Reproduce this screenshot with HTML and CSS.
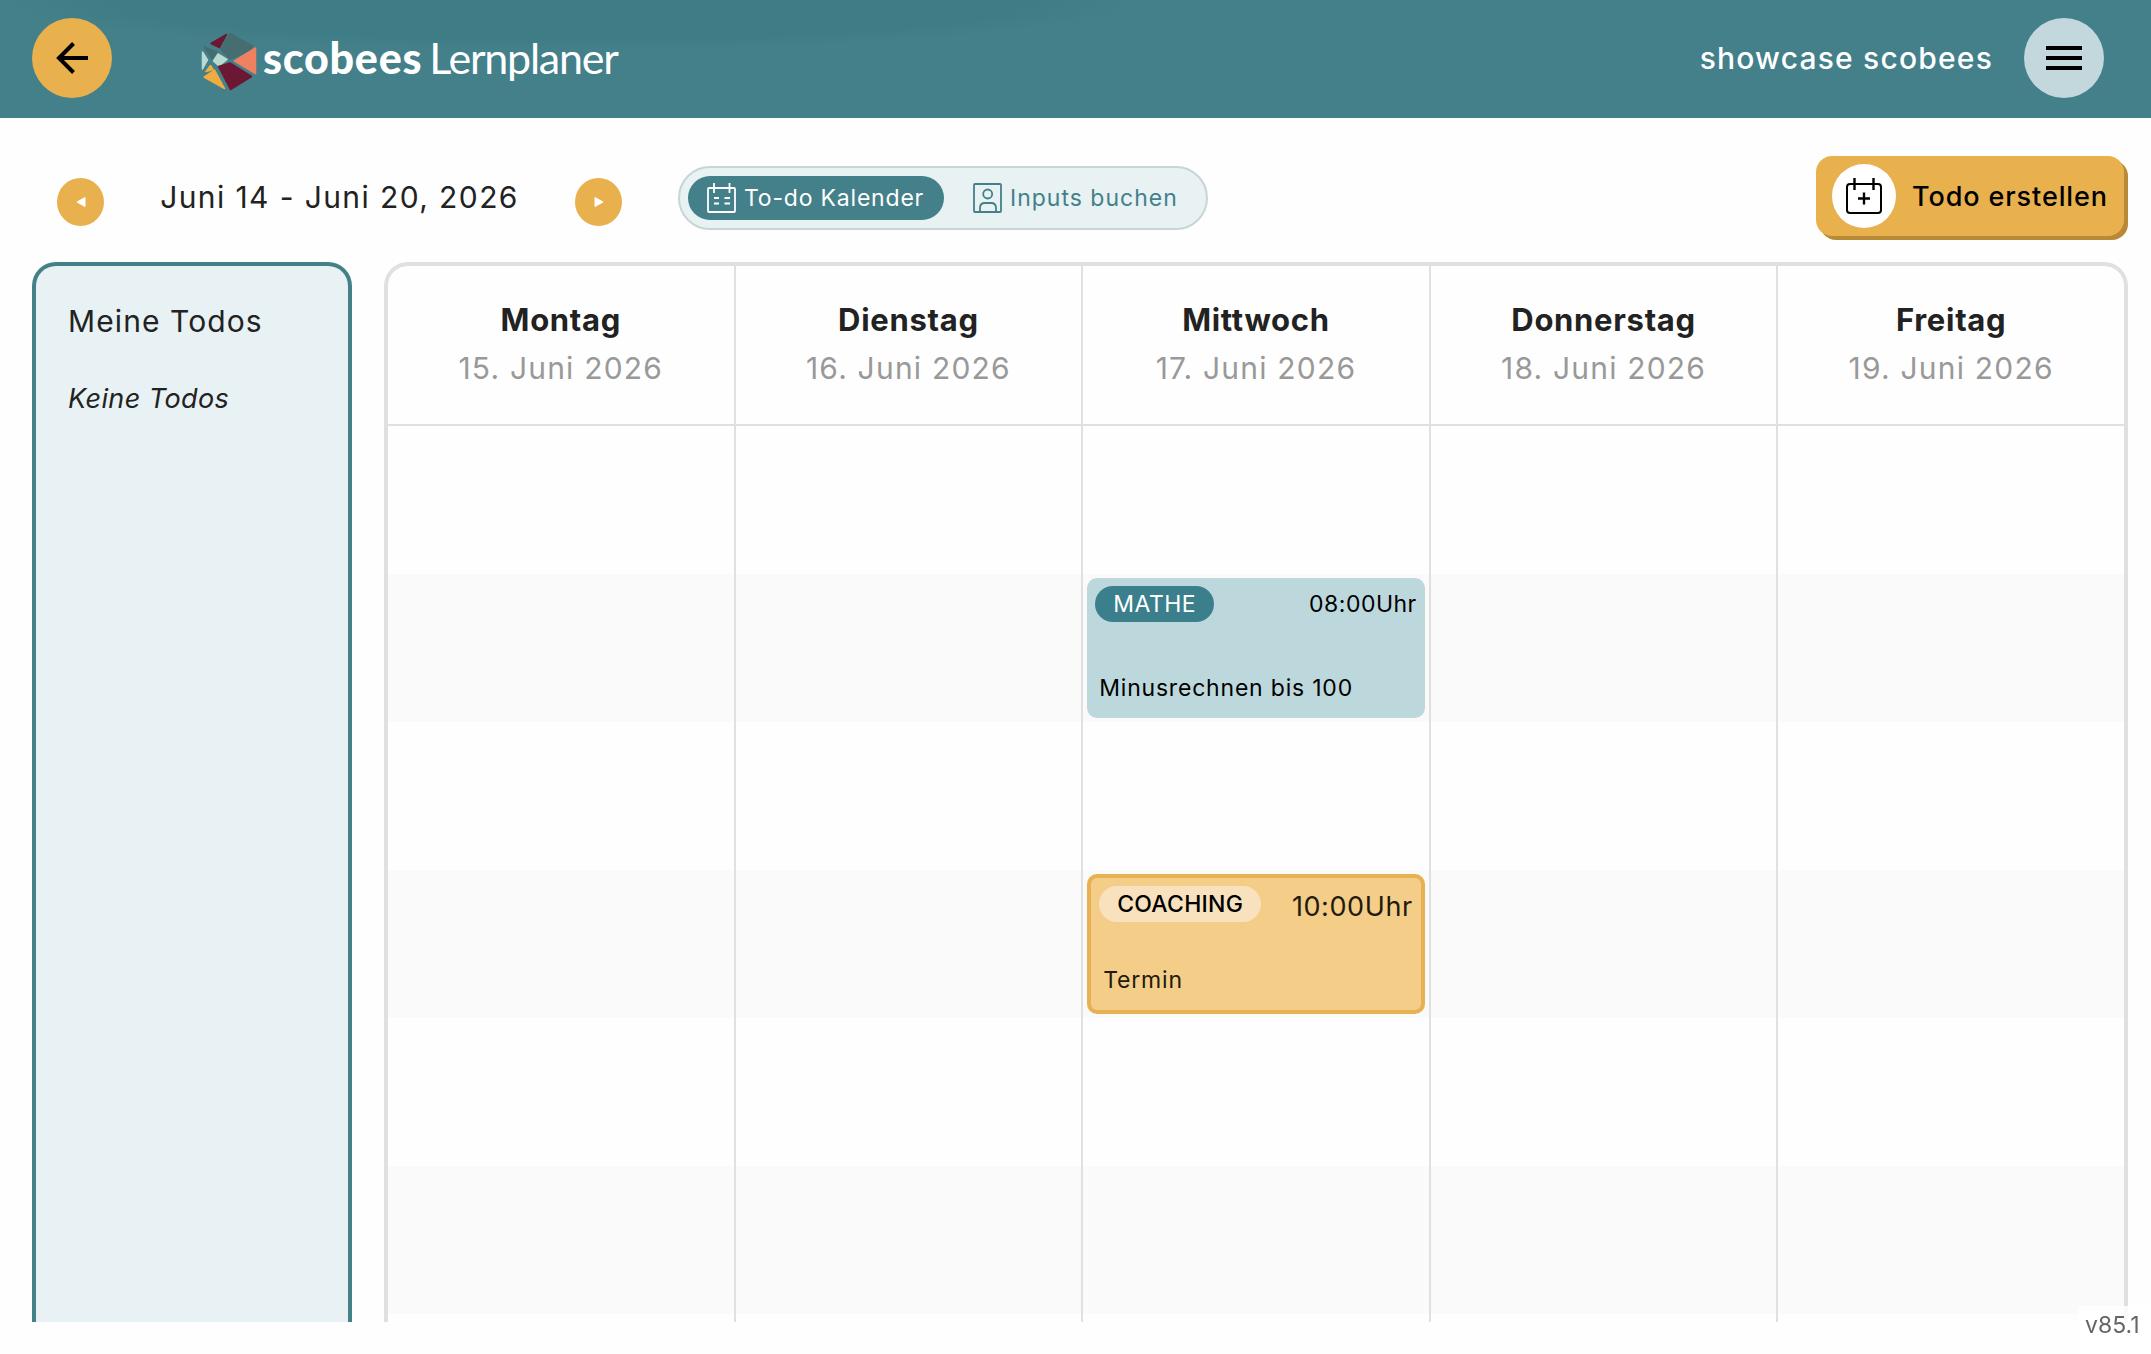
FILE: index.html
```html
<!DOCTYPE html>
<html lang="de">
<head>
<meta charset="utf-8">
<title>scobees Lernplaner</title>
<link rel="stylesheet" href="styles.css">
</head>
<body>
<header class="topbar">
  <button class="round back" aria-label="Zurück">
    <svg width="32" height="32" viewBox="0 0 32 32"><path d="M32 16H3M17.500 1.500 3 16 17.500 30.500" fill="none" stroke="#000" stroke-width="4"/></svg>
  </button>
  <div class="logo">
    <svg class="logo-mark" width="56" height="60" viewBox="0 0 56 60" stroke-width="1.5" stroke-linejoin="round">
      <path d="M10 11.500 25.500 2.500 18.500 15.500Z" fill="#6c1733" stroke="#6c1733"/>
      <path d="M29 1.500 51.500 14 50 18 29 27 20 17Z" fill="#466d70" stroke="#466d70"/>
      <path d="M3.500 15 16 20 11 27Z" fill="#466d70" stroke="#466d70"/>
      <path d="M1.500 20 6.500 28 1.500 37Z" fill="#b9d9d2" stroke="#b9d9d2"/>
      <path d="M17 22 26 27.500 18 34 12.500 29Z" fill="#b9d9d2" stroke="#b9d9d2"/>
      <path d="M54.500 16V41.500L33.500 29Z" fill="#ee8160" stroke="#ee8160"/>
      <path d="M29 31 50.500 44.500 29.500 57.500 17.500 34.500Z" fill="#6c1733" stroke="#6c1733"/>
      <path d="M9.500 33.500 12 37.500 5 39.500Z" fill="#eead42" stroke="#eead42"/>
      <path d="M3 45 13.500 38 23.500 56.500Z" fill="#eead42" stroke="#eead42"/>
    </svg>
    <span class="logo-name">scobees</span><span class="logo-sub">Lernplaner</span>
  </div>
  <span class="user">showcase scobees</span>
  <button class="round menu" aria-label="Menü">
    <svg width="36" height="24" viewBox="0 0 36 24"><path d="M0 2H36M0 12H36M0 22H36" stroke="#000" stroke-width="4"/></svg>
  </button>
</header>

<nav class="controls">
  <button class="step" aria-label="Vorherige Woche"><svg width="10" height="12" viewBox="0 0 10 12"><path d="M1 6 9 1.500V10.500Z" fill="#fff" stroke="#fff" stroke-linejoin="round"/></svg></button>
  <div class="range">Juni 14 - Juni 20, 2026</div>
  <button class="step" aria-label="Nächste Woche"><svg width="10" height="12" viewBox="0 0 10 12"><path d="M9 6 1 1.500V10.500Z" fill="#fff" stroke="#fff" stroke-linejoin="round"/></svg></button>
  <div class="toggle">
    <button class="tab active">
      <svg width="30" height="30" viewBox="0 0 30 30" fill="none" stroke="#fff" stroke-width="1.800"><rect x="1" y="5" width="27" height="24" rx="1"/><path d="M7 0V10M22.500 0V10M7 15H12M17.500 15H23M7 20.500H12M17.500 20.500H23"/></svg>
      <span>To-do Kalender</span>
    </button>
    <button class="tab">
      <svg width="30" height="30" viewBox="0 0 30 30" fill="none" stroke="#43808a" stroke-width="1.800"><rect x="1" y="1" width="27" height="28" rx="1"/><circle cx="14.700" cy="11" r="4.500"/><path d="M7 29V25Q7 20 12 20H18Q23 20 23 25V29"/></svg>
      <span>Inputs buchen</span>
    </button>
  </div>
  <button class="create">
    <span class="create-icon"><svg width="36" height="36" viewBox="0 0 36 36" fill="none" stroke="#000" stroke-width="2"><rect x="1" y="6" width="34" height="29" rx="3"/><path d="M8.500 0V12M27.500 0V12M18 14.500V26.500M12 20.500H24" stroke-width="2.400"/></svg></span>
    <span>Todo erstellen</span>
  </button>
</nav>

<main class="board">
  <aside class="todos">
    <h2>Meine Todos</h2>
    <p><em>Keine Todos</em></p>
  </aside>
  <section class="calendar">
    <div class="day"><div class="day-head"><b>Montag</b><span>15. Juni 2026</span></div><div class="slots"></div></div>
    <div class="day"><div class="day-head"><b>Dienstag</b><span>16. Juni 2026</span></div><div class="slots"></div></div>
    <div class="day"><div class="day-head"><b>Mittwoch</b><span>17. Juni 2026</span></div>
      <div class="slots">
        <article class="event lesson">
          <div class="event-top"><span class="pill">MATHE</span><time>08:00Uhr</time></div>
          <div class="title">Minusrechnen bis 100</div>
        </article>
        <article class="event coaching">
          <div class="event-top"><span class="pill">COACHING</span><time>10:00Uhr</time></div>
          <div class="title">Termin</div>
        </article>
      </div>
    </div>
    <div class="day"><div class="day-head"><b>Donnerstag</b><span>18. Juni 2026</span></div><div class="slots"></div></div>
    <div class="day"><div class="day-head"><b>Freitag</b><span>19. Juni 2026</span></div><div class="slots"></div></div>
  </section>
</main>
<div class="version">v85.1</div>
</body>
</html>
```
FILE: styles.css
```css
* { box-sizing: border-box; margin: 0; padding: 0; }
html, body { height: 100%; }
body {
  display: flex;
  flex-direction: column;
  background: #fefefe;
  color: #222;
  font-family: Inter, "Liberation Sans", sans-serif;
  white-space: nowrap;
  overflow: hidden;
}
button { border: 0; background: none; font: inherit; color: inherit; }
svg { display: block; flex: none; }

.topbar {
  flex: none;
  display: flex;
  align-items: center;
  height: 118px;
  padding: 0 47px 2px 32px;
  background: radial-gradient(closest-side, #3f7d86 80%, #43808a) 0 -50px / 1140px 100px no-repeat #43808a;
}
.round {
  flex: none;
  display: grid;
  place-items: center;
  width: 80px;
  height: 80px;
  border-radius: 50%;
}
.back { background: #e9b04e; }
.menu { background: #c3d8dd; margin-left: 31px; }
.logo {
  display: flex;
  align-items: center;
  height: 64px;
  margin-left: 89px;
  color: #fff;
  font-family: Lato, "Open Sans", sans-serif;
  font-size: 43px;
}
.logo-mark { margin-top: 7px; }
.logo-name { margin: -1px 0 0 6px; font-weight: 900; letter-spacing: .75px; }
.logo-sub { margin: -1px 0 0 7px; letter-spacing: -1.25px; }
.user { margin-left: auto; color: #fff; font-size: 30px; font-weight: 500; letter-spacing: 1.2px; }

.controls {
  flex: none;
  display: flex;
  align-items: center;
  height: 144px;
  padding: 0 27px 0 57px;
}
.step {
  display: grid;
  place-items: center;
  width: 47px;
  height: 48px;
  margin-top: 24px;
  border-radius: 50%;
  background: #e9b04e;
}
.range { width: 471px; margin-top: 14px; text-align: center; font-size: 30px; letter-spacing: 1.4px; }
.toggle {
  display: flex;
  align-items: center;
  width: 530px;
  height: 64px;
  margin: 16px 0 0 56px;
  padding: 0 8px;
  border: 2px solid #c8d4d6;
  border-radius: 32px;
  background: #e8f2f3;
  font-size: 23px;
}
.tab {
  display: flex;
  align-items: center;
  gap: 7px;
  height: 44px;
  padding: 0 0 0 19px;
  border-radius: 22px;
  color: #43808a;
  letter-spacing: 1px;
}
.tab.active { width: 256px; margin-right: 10px; background: #43808a; color: #fff; letter-spacing: .8px; }
.create {
  display: flex;
  align-items: center;
  width: 308px;
  height: 80px;
  margin: 12px 0 0 auto;
  padding-left: 16px;
  border-radius: 16px;
  background: #e9b04e;
  box-shadow: 4px 4px 0 #b88a35;
  color: #000;
  font-size: 27px;
  font-weight: 500;
  letter-spacing: .9px;
}
.create-icon {
  display: grid;
  place-items: center;
  width: 64px;
  height: 64px;
  margin-right: 16px;
  border-radius: 50%;
  background: #fff;
}

.board { flex: none; display: flex; gap: 32px; height: 1060px; padding: 0 23px 0 32px; }
.todos {
  width: 320px;
  padding: 33px 32px;
  border: 4px solid #43808a;
  border-bottom: 0;
  border-radius: 24px 24px 0 0;
  background: #e8f1f3;
}
.todos h2 { font-size: 30px; font-weight: 400; line-height: 44px; letter-spacing: 1.1px; }
.todos p { margin-top: 36px; font-size: 27px; line-height: 40px; letter-spacing: .4px; }
.calendar {
  flex: 1;
  display: flex;
  border: 4px solid #e0e0e0;
  border-bottom: 0;
  border-radius: 24px 24px 0 0;
  overflow: hidden;
}
.day {
  flex: 1 1 0;
  box-sizing: content-box;
  display: flex;
  flex-direction: column;
  border-right: 2px solid #e0e0e0;
}
.day:last-child { border-right: 0; }
.day-head {
  display: flex;
  flex-direction: column;
  align-items: center;
  height: 160px;
  padding-top: 30px;
  border-bottom: 2px solid #e0e0e0;
  font-size: 30px;
  line-height: 48px;
  letter-spacing: 1.2px;
}
.day-head b { font-size: 31px; font-weight: 700; letter-spacing: .7px; }
.day-head span { color: #999; }
.slots {
  flex: 1;
  padding: 152px 4px 0;
  background: repeating-linear-gradient(#fefefe 0 148px, #fafafa 148px 296px);
}
.event {
  height: 140px;
  margin-bottom: 156px;
  padding: 8px;
  border-radius: 10px;
  color: #000;
  font-size: 23px;
  letter-spacing: .5px;
}
.event-top { display: flex; justify-content: space-between; align-items: center; height: 36px; }
.pill { display: flex; align-items: center; height: 36px; padding: 0 18px; border-radius: 18px; }
.title { margin-top: 48px; padding-left: 4px; line-height: 36px; letter-spacing: .8px; }
.lesson { background: #bcd8dc; }
.lesson .pill { background: #3a7f8b; color: #fff; }
.coaching { border: 4px solid #e7b053; background: #f4ce88; color: #221a0c; }
.coaching .pill { background: #f8e2bd; color: #000; font-weight: 500; letter-spacing: .25px; }
.coaching time { margin-top: 4px; font-size: 27px; letter-spacing: .6px; }
.coaching .title { margin-top: 40px; }
.version {
  position: fixed;
  right: 0;
  top: 1306px;
  width: 73px;
  height: 48px;
  padding: 5px 0 0 7px;
  background: rgba(255, 255, 255, .8);
  color: #666;
  font-size: 23px;
}
```
